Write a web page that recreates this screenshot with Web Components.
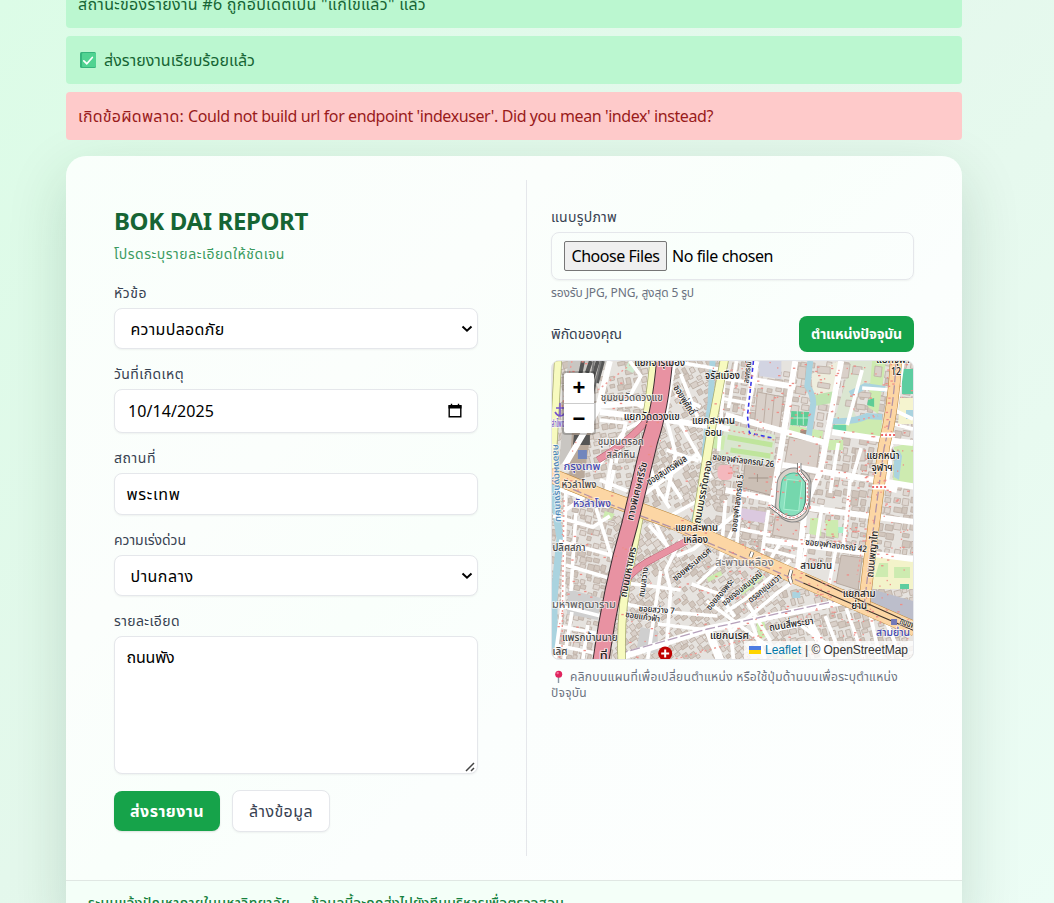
<!DOCTYPE html>
<html lang="th">
<head>
<meta charset="utf-8">
<title>BOK DAI REPORT</title>
<style>
html,body{margin:0;height:903px;overflow:hidden}
body{font-family:"Noto Sans","Noto Sans Thai","Leelawadee UI",sans-serif;font-size:16px;line-height:24px;background:linear-gradient(135deg,#dcfce7 0%,#e4f8ec 45%,#e8faf0 75%,#ecfdf5 100%)}
</style>
</head>
<body>
<report-page></report-page>
<script>
const define=(name,html,init)=>{
  const t=document.createElement('template');
  t.innerHTML=html;
  customElements.define(name,class extends HTMLElement{
    constructor(){
      super();
      this.attachShadow({mode:'open'}).appendChild(t.content.cloneNode(true));
    }
    connectedCallback(){ if(init) init(this,this.shadowRoot); }
  });
};

define('flash-message',`<style>
:host{display:flex;align-items:center;box-sizing:border-box;height:48px;padding:0 12px;border-radius:4px;background:#bbf7d0;color:#166534;gap:8px}
:host([kind=error]){background:#fecaca;color:#991b1b;gap:4px}
</style><slot></slot>`);

define('check-icon',`<style>:host{display:block;width:20px;height:18px}svg{display:block}</style>
<svg width="20" height="18" viewBox="0 0 20 18"><rect x="2" y="1" width="16" height="16" rx="1.500" fill="#35b57c"/><rect x="4" y="2" width="14" height="14" rx="1" fill="#50d391"/><path d="M5.800 9.800l3 2.900 5.500-6.200" fill="none" stroke="#fff" stroke-width="1.700" stroke-linecap="round"/></svg>`);

define('pin-icon',`<style>:host{display:inline-block;width:19px;height:14px;vertical-align:-3px}svg{display:block}</style>
<svg width="19" height="14" viewBox="0 0 19 14"><path d="M7.500 6v7" stroke="#8b98a5" stroke-width="1.400"/><circle cx="7.700" cy="4.200" r="3.500" fill="#e0245e"/><circle cx="6.700" cy="3" r="1.200" fill="#f7709b"/></svg>`);

define('form-field',`<style>
:host{display:block;margin-bottom:15px}
.label{height:20px;line-height:20px;font-size:14px;color:#374151;margin-bottom:5px;white-space:nowrap}
.box{position:relative;box-sizing:border-box;display:flex;align-items:center;height:var(--h,41px);padding:0 12px 0 11.500px;border:1px solid #e5e7eb;border-radius:8px;background:#fff;color:#000;box-shadow:0 1px 2px rgba(0,0,0,.05)}
:host([type=select]) .box{padding:0 4px 0 15.500px}
:host([type=date]) .box{padding:0 14px 0 13px}
:host([type=area]) .box{align-items:flex-start;padding-top:8px}
:host([type=file]) .box{background:transparent;gap:5px;padding-left:12px}
.end{margin-left:auto}
svg{display:none}
:host([type=select]) .arrow,:host([type=date]) .cal{display:block}
:host([type=area]) .grip{display:block;position:absolute;right:1px;bottom:0}
</style>
<div class="label"><slot name="label"></slot></div>
<div class="box"><slot></slot>
<svg class="arrow end" width="12" height="12" viewBox="0 0 12 12"><path d="M1.500 3.500L6 7.700l4.500-4.200" fill="none" stroke="#000" stroke-width="2"/></svg>
<svg class="cal end" width="16" height="16" viewBox="0 0 16 16"><path d="M1.500 2h13v3.500h-13z" fill="#000"/><path d="M2.200 3h11.600v10.800H2.200z" fill="none" stroke="#000" stroke-width="1.400"/><path d="M4.500 .8v2M11.500 .8v2" stroke="#000" stroke-width="1.400"/></svg>
<svg class="grip" width="12" height="12" viewBox="0 0 12 12"><path d="M2 10l8-8M7 10l3-3" stroke="#444" stroke-width="1.500"/></svg>
</div>`);

define('choose-button',`<style>:host{display:flex;align-items:center;justify-content:center;box-sizing:border-box;width:103px;height:30px;border:1px solid #767676;border-radius:2px;background:#efefef;line-height:24px}</style><slot></slot>`);

define('action-button',`<style>
:host{display:flex;align-items:center;justify-content:center;box-sizing:border-box;border-radius:8px;background:#16a34a;color:#fff;font-weight:700;box-shadow:0 1px 2px rgba(0,0,0,.12);width:106px;height:40px}
:host([kind=plain]){background:#fff;color:#374151;font-weight:400;border:1px solid #e5e7eb;width:98px;height:42px;box-shadow:0 1px 2px rgba(0,0,0,.05)}
:host([kind=small]){width:115px;height:36px;font-size:14px;box-shadow:none}
</style><slot></slot>`);

define('city-map',`<style>
:host{display:block;position:relative;box-sizing:border-box;height:300px;border:1px solid #e5e7eb;border-radius:8px;overflow:hidden;background:#eae6e1}
svg.map{display:block;width:100%;height:298px}
.zoom{position:absolute;left:10px;top:10px;width:34px;height:64px;box-sizing:border-box;border:2px solid rgba(0,0,0,.2);border-radius:4px;background:#fff;background-clip:padding-box;color:#000}
.zoom div{height:30px;display:flex;align-items:center;justify-content:center}
.zoom div+div{border-top:1px solid #ccc;height:29px}
.zoom b{font:bold 22px/30px "Liberation Sans",sans-serif}
.credit{position:absolute;right:0;bottom:0;height:18px;padding:0 5px;display:flex;align-items:center;gap:4px;background:rgba(255,255,255,.8);font:12px/18px "Liberation Sans",sans-serif;color:#333}
.credit span{color:#0078a8}
</style>
<svg class="map" viewBox="551 361 362 298" preserveAspectRatio="none">
<rect x="551" y="361" width="362" height="298" fill="#e6e3df"/>
<g id="blocks"></g>
<g id="land">
<path d="M567 361h40l-17 30-10 55-22 20z" fill="#c9c6c2"/><path d="M582 361l-14 70M590 361l-4 12M597 361l-9 28M602 361l-6 22" stroke="#555" stroke-width="4"/><path d="M593 361l-10 70M600 361l-12 50" stroke="#777" stroke-width="2"/>
<path d="M571 432h19l-8 52-14-4z" fill="#b9a99b"/><path d="M573 435h16v10h-17z" fill="#555"/><rect x="577" y="450" width="9" height="9" fill="#7286bd"/>
<path d="M567 589l33 9-3 22-31-6z" fill="#cfcfcf"/><path d="M640 627l17 4v22h-22z" fill="#cfcfcf"/>
<path d="M628 361l10 4-6 8-8-4z" fill="#cfead0"/><path d="M604 511l10 3-4 6-8-2z" fill="#cdebb0"/>
<path d="M758 361h23v18l-22-3z" fill="#d2d4e2"/>
<path d="M757 392l26 5-4 32-25-5z" fill="#d9d0c9" stroke="#bcaea4"/><path d="M766 393l-3 32M774 395l-3 32" stroke="#bcaea4"/>
<path d="M790 425l33 6-2 12-34-7z" fill="#cdebb0"/><path d="M791 411l19 1-2 14-18-1z" fill="#5dcd96"/><path d="M791 418h19M797 411v14M803 411v14" stroke="#bdebcf"/><path d="M800 430h9v7h-9z" fill="#a58b7c"/>
<path d="M811 374l25-12h7l-10 45-20-8z" fill="#eeeede"/><path d="M813 395l22-4-3 12-18 3z" fill="#bfe3b0"/>
<path d="M850 361h30v18l-19 8-9 20 6 14-24-1 9-30z" fill="#dbe6d1"/><path d="M838 419l44-3-1 22-48-4z" fill="#cdebb0"/><path d="M833 425h13v6h-13z" fill="#68d3a8"/>
<path d="M872 361h14l-8 53-10-7z" fill="#cdebb0"/><path d="M868 400l6-2v9l-7-2z" fill="#5dcd96"/>
<g fill="#d9d0c9" stroke="#bcaea4" stroke-width=".8"><path d="M842 364h8l-2 14h-8zM853 366l9 1-1 8-9-1zM846 400l10 1-1 6-10-1zM859 392l12 1-1 5-12-1zM875 366l7 1-1 10-7-1zM796 386l10 2-1 7-10-2zM798 366l8 1-1 12-8-1zM817 366l13 1v7l-13-1zM818 382l12 2-1 5-12-2zM856 404l9 1v5l-9-1z"/></g>
<path d="M902 369h11v25h-11z" fill="#5dcda0"/><path d="M900 398h13v26h-15z" fill="#f5f4cf"/><path d="M906 410h7v9h-7z" fill="#aad3df"/>
<path d="M894 447l19-5v46l-20-5z" fill="#cdebb0"/><path d="M894 455l5-5 3 6-3 24-5-3z" fill="#aad3df"/>
<path d="M725 423l50 12-2 28-55-8z" fill="#d9e6cf"/><path d="M727 437l45 8M730 450l40 6" stroke="#bfe59c" stroke-width="5"/>
<path d="M714 433l11 3-2 14-11-2z" fill="#cdebb0"/><rect x="717" y="465" width="15" height="15" rx="5" fill="#f4b8bd"/>
<path d="M789 437l31 6-4 28-32-6z" fill="#d9d0c9" stroke="#bcaea4"/><path d="M745 460l30 8-5 27-28-7z" fill="#cbbfb5" stroke="#afa299"/><path d="M748 478h20M757 474v8" stroke="#a29489"/>
<path d="M828 440h15v10h-15z" fill="#cdebb0"/><path d="M855 449h10v12h-10z" fill="#d9d0c9" stroke="#bcaea4"/>
<path d="M810 518h11v18l-12-2zM825 520h13v18l-12-2z" fill="#cdebb0"/><path d="M838 527h9v6h-9z" fill="#aaf0cb"/>
<path d="M775 517l25 6-2 17-26-5z" fill="#d9d0c9" stroke="#bcaea4"/><path d="M740 508l26 4-2 11-26-4z" fill="#dbc9df"/>
<path d="M841 555l21 3-4 32-22-7z" fill="#cfc4bc" stroke="#b7aaa0"/>
<path d="M873 554l40 5v30h-40z" fill="#f3f3ca"/><path d="M879 563h9v14h-13zM894 567h16v11h-16z" fill="#cdebb0"/><path d="M900 584h9v5h-9z" fill="#5dcda0"/><path d="M871 589l42 12v19l-42-16z" fill="#bcbecb"/>
<path d="M756 622h8l3 14-9 4zM783 652h13v7h-13zM738 590l22-18 4 5-22 18zM706 578l14-7 2 4-14 7z" fill="#cdebb0"/><path d="M792 592h8v6h-8z" fill="#aad3df"/>
<path d="M553 430q-3 60 6 108l-6 60v50" fill="none" stroke="#aad3df" stroke-width="7"/>
<path d="M810 361l-3 25q6 8 6 18l-5 35M832 421q24 1 35-5l15 1M850 394l15-8 20 3M712 361l-2 42-3 20-6 65-8 35" fill="none" stroke="#aad3df" stroke-width="6"/>
</g>
<g id="streets" fill="none" stroke="#fff" stroke-width="3.700" stroke-linejoin="round">
<path stroke-width="6" d="M756 361l-12 63M795 361l-13 80-11 65M841 361l-21 111-15 33-8 70M609 361l-12 48-33 56"/>
<path stroke-width="6" d="M599 412l60 7 70 10M665 411l-28-8-44 3M725 415l100 28M832 432l53 8M782 465l135 22M753 380l42 7M725 490l48 10M808 508l107 14M765 540l148 19M885 440l28 3M892 443q-6 4-3 20l-4 24 12 3"/>
<path d="M725 361l-7 90M736 361l-8 47M717 378l30 4M719 398l28 5M674 361l-9 55 10 38-10 48M680 374l17 43M675 395l25 12M670 361l48 8M640 497l57-43M677 419l34 59M661 468l20 31M651 480l18 28M666 450l32 11M662 520l44-24M629 361l11 15-13 24 15 7M599 420l26 3-10 40M611 459l-6 32M557 489l25 9-20 14M552 516l40 11 17-11M558 541l52 14M565 565l43 13M575 513l-5 78M595 508l18 56M613 470l-8 38M625 429l-28 38M626 429l28-15M599 480l28 11M647 459l12 37"/>
<path d="M625 583l55 7M660 571l-13 88M680 540l-15 30 5 20-5 69M620 603l43 9M667 612l50 4M657 624l50 6M697 584l20-19 15-35M676 556l17-7 42-35M691 584l28 10 15 23M706 601l64 47M725 612l20-13 45-39M747 603l23 38M727 635l50-42 28-20M810 621l14 38M775 630l25-5 47 34M706 628l11 31M729 625l4 34M749 617l16 42M825 616l17 43M846 608l18 51M868 605l12 54M882 612l20 47M725 500l-5 62M740 500l-5 60M768 510l-8 55M765 549l30 8M779 544l-15 26M740 529l30 6M808 534l-8 44M837 542l-10 52M822 505l-6 40M850 480l-7 70M861 448l-10 34M838 443l-8 50M862 370l-15 55M862 388l28 2M903 361l-7 50 17 8M893 424l20 5M552 604l48 12M557 626l42 8M554 645l40 8M587 625l-5 34M571 612l-8 47M648 525l25 28M640 516l-8 40M653 520l14 27M565 490l-3 110-8 59"/>
<path stroke-width="8" d="M808 620l22 42M708 631l12 30"/>
</g>
<g fill="none" stroke-linejoin="round">
<path d="M617 658l90-29 46-9 116-24" stroke="#fff" stroke-width="7"/><path d="M617 654l90-25 45-10 117-25" stroke="#b6a1bb" stroke-width="1.300" stroke-dasharray="10 3"/>
<path d="M557 361l-4 75-3 40" stroke="#a8ad72" stroke-width="8"/><path d="M557 361l-4 75-3 40" stroke="#f7fabf" stroke-width="6.500"/>
<path d="M653 361q-4 42-9 63M639 515l-10 52q-10 42-8 95" stroke="#a8ad72" stroke-width="8.500"/><path d="M653 361q-4 42-9 63M639 515l-10 52q-10 42-8 95" stroke="#f7fabf" stroke-width="7"/>
<path d="M724 359l-12 63-17 104" stroke="#a8ad72" stroke-width="9"/><path d="M724 359l-12 63-17 104" stroke="#f7fabf" stroke-width="7.500"/>
<path d="M549 475l49 20 77 28 80 36 50 22 110 48" stroke="#b78337" stroke-width="15"/><path d="M549 475l49 20 77 28 80 36 50 22 110 48" stroke="#fcd6a4" stroke-width="14"/>
<path d="M896 359q-2 46-12 87l-11 83-9 76" stroke="#b78337" stroke-width="12"/><path d="M896 359q-2 46-12 87l-11 83-9 76" stroke="#fcd6a4" stroke-width="11"/>
<path d="M805 575l50 23 62 28M803 583l112 48" stroke="#443830" stroke-width="1.200"/>
<path d="M896 361q-2 46-12 87l-11 83-9 74M550 480l45 19 80 30 128 54" stroke="#b193a5" stroke-width="1.300" stroke-dasharray="9 3"/>
<path d="M597 460q38-22 57-50M619 591q9-20 33-32l34-18" stroke="#b65e70" stroke-width="7"/><path d="M597 460q38-22 57-50M619 591q9-20 33-32l34-18" stroke="#e892a2" stroke-width="6"/>
<path d="M664 359q-4 49-15 82-10 42-20 83-19 65-29 137" stroke="#3d3034" stroke-width="17"/><path d="M664 359q-4 49-15 82-10 42-20 83-19 65-29 137" stroke="#e892a2" stroke-width="15"/>
<path d="M571 361l-10 47M563 500l-2 150M597 390l32-25M728 430l46 10M850 500l-5 50M858 420l20-4M727 560l25 8M864 535l-7 40M675 659l90-25" stroke="#ee9c96" stroke-width="1.400" stroke-dasharray="2 3"/>
<path d="M753 361l-6 55 2 17 23 5" stroke="#3a37e8" stroke-width="1.600" stroke-dasharray="4 3"/>
<rect x="776" y="468" width="34" height="54" rx="17" fill="#d9d0c9" stroke="#888" transform="rotate(4 793 495)"/><g transform="rotate(6 792 495)"><rect x="780" y="473" width="25" height="44" rx="12" fill="#88e0be" stroke="#52b897"/><rect x="785" y="480" width="15" height="30" fill="#75d7ad" stroke="#a9eed1"/></g>
<path d="M799 463v9l8 10v20l-3 9q-12 13-26 1l-8-6M752 552l-2 5M791 570l-2 7 2 6" stroke="#555" stroke-width="4"/><path d="M799 463v9l8 10v20l-3 9q-12 13-26 1l-8-6M752 552l-2 5M791 570l-2 7 2 6" stroke="#fff" stroke-width="2.600"/><path d="M799 466v6l8 10v20l-3 9q-12 13-26 1l-8-6" stroke="#e77" stroke-dasharray="2 2"/>
<path d="M881 435h14M872 487h14" stroke="#fff" stroke-width="5"/><path d="M881 435h14M872 487h14" stroke="#e66" stroke-width="2" stroke-dasharray="2 2"/>
</g>
<g id="dots" fill="#ee8e87"></g>
<path d="M554 412q5 8 11 0M559 403v13M555 408h9" fill="none" stroke="#7755cc" stroke-width="1.500"/>
<circle cx="664.500" cy="653.500" r="7" fill="#bf0000"/><path d="M660.500 653.500h8M664.500 649.500v8" stroke="#fff" stroke-width="2"/><rect x="891" y="619" width="6" height="6" fill="#7279b8"/>
<g id="names" font-family="Noto Sans,Noto Sans Thai,sans-serif" font-weight="500" text-anchor="middle" stroke="#fff" stroke-width="1.800" stroke-opacity=".65" paint-order="stroke" stroke-linejoin="round"></g>
</svg>
<div class="zoom"><div><b>+</b></div><div><b>−</b></div></div>
<div class="credit"><svg width="12" height="8"><path fill="#4c7be1" d="M0 0h12v4H0z"/><path fill="#ffd500" d="M0 4h12v4H0z"/></svg><fit-text w="36"><span>Leaflet</span></fit-text><fit-text w="103">| © OpenStreetMap</fit-text></div>`,(host,root)=>{
  const NS='http://www.w3.org/2000/svg';
  let seed=41;
  const rnd=()=>(seed=(seed*16807)%2147483647)/2147483647;
  // Building footprints, laid out along the street angle of each district
  const west=[],east=[];
  const fill=(out,x0,y0,x1,y1,ang,step)=>{
    for(let y=y0;y<y1;y+=step) for(let x=x0;x<x1;x+=step){
      if(rnd()<.1) continue;
      const w=step*(.45+rnd()*.5),h=step*(.4+rnd()*.5),tone=['#d9d0c9','#d2c7be','#dfd7d1','#cfc4bb'][Math.floor(rnd()*4)];
      out.push(`<rect x="${(x+rnd()*2).toFixed(1)}" y="${(y+rnd()*2).toFixed(1)}" width="${w.toFixed(1)}" height="${h.toFixed(1)}" fill="${tone}" transform="rotate(${ang} ${x} ${y})"/>`);
    }
  };
  fill(west,551,361,645,500,-12,8); fill(west,551,500,610,659,14,7);
  fill(west,650,361,722,510,-28,7.5); fill(west,612,520,780,659,-35,7.5);
  fill(east,715,361,913,560,9,8.5); fill(east,780,590,913,659,-15,8);
  root.getElementById('blocks').innerHTML='<g stroke="#bdb0a6" stroke-width=".8">'+west.join('')+east.join('')+'</g>';
  let dots='';
  for(let i=0;i<560;i++){
    const x=i<460?722+rnd()*190:555+rnd()*160,y=361+rnd()*298;
    dots+=`<rect x="${x.toFixed(1)}" y="${y.toFixed(1)}" width="${rnd()<.5?2.4:1.3}" height="1.3"/>`;
  }
  root.getElementById('dots').innerHTML=dots;
  // [text, centre x, centre y, length, angle, colour, size]
  const names=[
    ['แยกจารุเมือง',659,363,51],['จรัสเมือง',722,376,35],['ชุมชนวัดดวงแข',631,398,62,0,'#555'],['แยกวัดดวงแข',651,417,56],
    ['แยกสะพาน',713,421,43],['อ่อน',713,433,17],['ชุมชนตรอก',620,442,46,0,'#555'],['สลักหิน',620,455,29,0,'#555'],
    ['กรุงเทพ',581,467,37,0,'#4348b0',11],['หัวลำโพง',578,485,35,0,'#444'],['หัวลำโพง',591,504,38,0,'#4348b0'],['ลำโพง',557,424,13,0,'#7755cc'],
    ['คลองผดุงกรุงเกษม',557,483,78,88,'#4b86b8',9],['ซอยพู่ศักดิ์',684,400,33,58],['ซอยสุนทรพิมล',666,470,46,-33],
    ['ทางพิเศษศรีรัช',636,491,60,-76],['ถนนบรรทัดทอง',702,492,64,-79],['ซอยจุฬาลงกรณ์ 5',736,503,58,-83,'#222',8.5],
    ['ซอยจุฬาลงกรณ์ 26',743,460,62,7,'#222',9],['ลงกรณ์',746,372,22,-82,'#222',8],['แยกจุฬา',893,360,34],['12',896,372,10,0,'#222',11],
    ['แยกหน้า',883,456,33],['จุฬาฯ',882,468,21],['ซอยจุฬาลงกรณ์ 42',836,545,62,7,'#222',9],['ถนนพญาไท',872,554,47,-84],
    ['แยกสะพาน',696,528,43],['เหลือง',695,540,25],['ปลิศสภา',568,548,33,0,'#444'],['ถนนมหานคร',627,572,51,-79],
    ['ถนนสว่าง',642,582,30,-82,'#222',8.5],['มหาพฤฒาราม',583,605,64,0,'#666',11],['ซอยสว่าง 7',656,609,36,4,'#222',8.5],
    ['ซอยแก้วฟ้า',642,616,35,8,'#222',8.5],['ซอยพระนคเรศ',691,564,47,-39,'#222',9],['ซอยสองพระ',719,594,38,-50,'#222',9],
    ['ซอยจอมสมบูรณ์',741,588,49,-39,'#222',9],['ตรอกขุนนาวา',764,588,40,-39,'#222',9],['สะพานเหลือง',744,563,59,0,'#777',10.5],
    ['สามย่าน',816,566,32],['แยกสาม',859,594,33],['ย่าน',859,606,16],['ถนนพระรามที่ 4',919,627,40,20],['สามย่าน',893,633,34,0,'#4348b0'],
    ['ถนนสี่พระยา',791,624,45,-9],['แยกนเรศ',729,636,39],['แพรกบ้านนาย',589,638,56,0,'#444'],['เลิศ',559,652,15,0,'#444'],['ที่',603,656,8]
  ];
  for(const [s,x,y,len,a=0,c='#222',size=10] of names){
    const t=document.createElementNS(NS,'text');
    t.setAttribute('x',x); t.setAttribute('y',y+3.5);
    t.setAttribute('textLength',len); t.setAttribute('lengthAdjust','spacingAndGlyphs');
    t.setAttribute('fill',c); t.setAttribute('font-size',size);
    if(a) t.setAttribute('transform',`rotate(${a} ${x} ${y})`);
    t.textContent=s;
    root.getElementById('names').appendChild(t);
  }
});

define('report-form',`<style>
:host{display:block;padding:24px;box-sizing:border-box;width:437px;border-right:1px solid #e5e7eb;padding-right:48px;height:676px}
h1{margin:0;height:32px;line-height:34px;font-size:24px;color:#166534}
.sub{height:20px;line-height:20px;margin:8px 0 19px;font-size:14px;color:#3b9a5f}
.row{display:flex;align-items:center;gap:12px;margin-top:16px}
</style>
<h1><fit-text w="194">BOK DAI REPORT</fit-text></h1>
<div class="sub"><fit-text w="171">โปรดระบุรายละเอียดให้ชัดเจน</fit-text></div>
<form-field type="select"><fit-text slot="label" w="33">หัวข้อ</fit-text><fit-text w="94">ความปลอดภัย</fit-text></form-field>
<form-field type="date" style="--h:44px"><fit-text slot="label" w="70">วันที่เกิดเหตุ</fit-text><fit-text w="86">10/14/2025</fit-text></form-field>
<form-field style="--h:42px"><fit-text slot="label" w="42">สถานที่</fit-text><fit-text w="54">พระเทพ</fit-text></form-field>
<form-field type="select"><fit-text slot="label" w="72">ความเร่งด่วน</fit-text><fit-text w="63">ปานกลาง</fit-text></form-field>
<form-field type="area" style="--h:138px"><fit-text slot="label" w="66">รายละเอียด</fit-text><fit-text w="48">ถนนพัง</fit-text></form-field>
<div class="row"><action-button><fit-text w="74">ส่งรายงาน</fit-text></action-button><action-button kind="plain"><fit-text w="64">ล้างข้อมูล</fit-text></action-button></div>`);

define('report-side',`<style>
:host{display:block;padding:27px 24px 0;box-sizing:border-box;flex:1;min-width:0}
.hint{height:16px;line-height:16px;font-size:12px;color:#6b7280;margin-top:-10px}
.row{display:flex;align-items:center;justify-content:space-between;margin:15px 0 8px;font-size:14px;color:#374151}
.help{margin-top:9px;font-size:12px;line-height:16px;color:#6b7280;white-space:nowrap}
.help div{height:16px}
</style>
<form-field type="file" style="--h:48px"><fit-text slot="label" w="66">แนบรูปภาพ</fit-text><choose-button><fit-text w="88">Choose Files</fit-text></choose-button><fit-text w="101">No file chosen</fit-text></form-field>
<div class="hint"><fit-text w="143">รองรับ JPG, PNG, สูงสุด 5 รูป</fit-text></div>
<div class="row"><fit-text w="71">พิกัดของคุณ</fit-text><action-button kind="small"><fit-text w="91">ตำแหน่งปัจจุบัน</fit-text></action-button></div>
<city-map></city-map>
<div class="help"><div><pin-icon></pin-icon><fit-text w="328">คลิกบนแผนที่เพื่อเปลี่ยนตำแหน่ง หรือใช้ปุ่มด้านบนเพื่อระบุตำแหน่ง</fit-text></div><div><fit-text w="36">ปัจจุบัน</fit-text></div></div>`);

define('report-card',`<style>
:host{display:block;box-sizing:border-box;height:767px;margin-top:8px;border-radius:20px 20px 0 0;background:linear-gradient(135deg,#f9fffb,#fbfefc 30%,#f9fffb 45%,#fbfefd 60%,#fdfffe)}
.cols{display:flex;padding:24px}
.foot{border-top:1px solid #e0e7e3;background:#f4fff8;color:#15803d;font-size:14px;font-weight:500;line-height:20px;padding:12px 22px 0;height:30px;display:flex;gap:21px}
</style>
<div class="cols"><report-form></report-form><report-side></report-side></div>
<div class="foot"><fit-text w="202">ระบบแจ้งปัญหาภายในมหาวิทยาลัย</fit-text><fit-text w="253">ข้อมูลนี้จะถูกส่งไปยังทีมบริหารเพื่อตรวจสอบ</fit-text></div>`);

define('report-page',`<style>
:host{display:flex;flex-direction:column;gap:8px;width:896px;height:943px;margin-left:66px;margin-top:-20px}
report-card{box-shadow:0 50px 50px -12px rgba(0,0,0,.25)}
report-card{box-shadow:0 20px 60px rgba(0,60,30,.16)}
flash-message{position:relative;z-index:1}
</style>
<flash-message><fit-text w="348">สถานะของรายงาน #6 ถูกอัปเดตเป็น "แก้ไขแล้ว" แล้ว</fit-text></flash-message>
<flash-message><check-icon></check-icon><fit-text w="151" style="margin-left:-2px">ส่งรายงานเรียบร้อยแล้ว</fit-text></flash-message>
<flash-message kind="error"><fit-text w="106">เกิดข้อผิดพลาด:</fit-text><fit-text w="525">Could not build url for endpoint 'indexuser'. Did you mean 'index' instead?</fit-text></flash-message>
<report-card></report-card>`);

// Tracks its text so that it occupies the width given in the w attribute
define('fit-text',`<style>:host{display:inline-block;white-space:nowrap}</style><slot></slot>`,host=>{
  const target=+host.getAttribute('w');
  const width=()=>host.getBoundingClientRect().width;
  host.style.letterSpacing='0px';
  const base=width();
  host.style.letterSpacing='1px';
  const n=width()-base;
  host.style.letterSpacing=n>0?((target-base)/n).toFixed(3)+'px':'0px';
});
</script>
</body>
</html>
